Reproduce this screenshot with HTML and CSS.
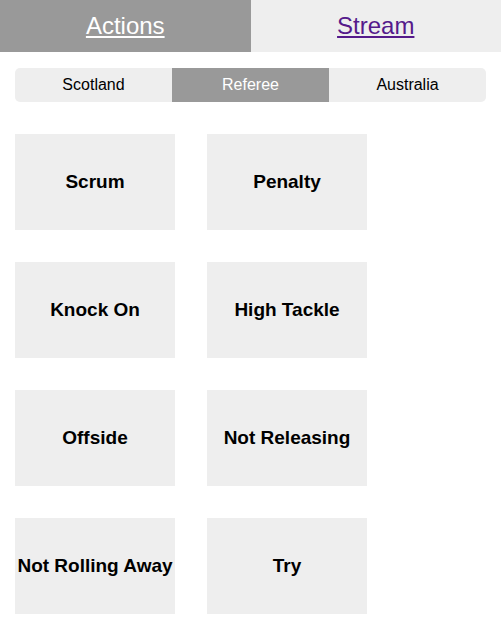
FILE: index.html
```html
<!DOCTYPE html>
<html>
<head>
<meta charset="utf-8">
<link rel="stylesheet" href="styles.css">
</head>
<body>
<nav class="tabs">
  <a class="tab tab-active" href="#actions">Actions</a>
  <a class="tab tab-other" href="#stream">Stream</a>
</nav>
<div class="segmented">
  <div class="seg">Scotland</div>
  <div class="seg seg-active">Referee</div>
  <div class="seg">Australia</div>
</div>
<div class="grid">
  <div class="btn">Scrum</div>
  <div class="btn">Penalty</div>
  <div class="btn">Knock On</div>
  <div class="btn">High Tackle</div>
  <div class="btn">Offside</div>
  <div class="btn">Not Releasing</div>
  <div class="btn">Not Rolling Away</div>
  <div class="btn">Try</div>
</div>
</body>
</html>
```
FILE: styles.css
```css
html, body {
  margin: 0;
  padding: 0;
  background: #fff;
  font-family: "Liberation Sans", Arial, sans-serif;
}
.tabs {
  display: flex;
  height: 52px;
}
.tab {
  flex: 1;
  display: flex;
  align-items: center;
  justify-content: center;
  font-size: 24px;
  text-decoration: underline;
}
.tab-active {
  background: #999999;
  color: #ffffff;
}
.tab-other {
  background: #eeeeee;
  color: #551a8b;
}
.segmented {
  display: flex;
  margin: 16px 15px 0 15px;
  height: 34px;
  background: #eeeeee;
  border-radius: 5px;
  overflow: hidden;
}
.seg {
  flex: 1;
  display: flex;
  align-items: center;
  justify-content: center;
  font-size: 16px;
  color: #000;
}
.seg-active {
  background: #999999;
  color: #ffffff;
}
.grid {
  display: grid;
  grid-template-columns: 160px 160px;
  grid-auto-rows: 96px;
  column-gap: 32px;
  row-gap: 32px;
  padding: 32px 15px 0 15px;
}
.btn {
  background: #eeeeee;
  display: flex;
  align-items: center;
  justify-content: center;
  font-weight: bold;
  font-size: 19px;
  color: #000;
  white-space: nowrap;
}
```
